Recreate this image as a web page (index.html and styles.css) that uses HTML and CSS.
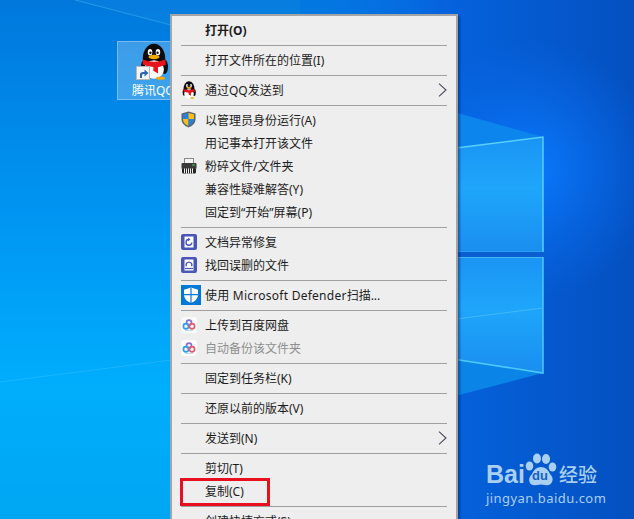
FILE: index.html
```html
<!DOCTYPE html>
<html lang="zh-CN">
<head>
  <meta charset="UTF-8">
  <title>右键菜单</title>
  <link rel="stylesheet" href="styles.css">
</head>
<body>
  <svg class="icon-defs" width="0" height="0">
    <defs>
      <symbol id="penguin" viewBox="0 0 24 28">
        <ellipse cx="12" cy="12" rx="8.5" ry="11.5" fill="#0a0a0a"/>
        <ellipse cx="4.5" cy="18" rx="2.4" ry="5" fill="#101010"/>
        <ellipse cx="20" cy="18" rx="2.6" ry="5.5" fill="#101010"/>
        <ellipse cx="12" cy="20" rx="7.5" ry="7" fill="#fff"/>
        <path d="M3.6 12.5Q12 16 20.6 12.5L21 16.5Q16 18.2 15 18.4L15 23L11.5 21L11.5 18.2Q7 18 3.4 16Z" fill="#e8141c"/>
        <ellipse cx="9" cy="7" rx="1.7" ry="2.4" fill="#fff"/>
        <ellipse cx="15" cy="7" rx="1.7" ry="2.4" fill="#fff"/>
        <circle cx="9.3" cy="7.4" r=".9" fill="#111"/>
        <circle cx="14.7" cy="7.4" r=".9" fill="#111"/>
        <ellipse cx="12" cy="10.6" rx="4.2" ry="1.7" fill="#f5a800"/>
        <ellipse cx="17" cy="26.6" rx="3.4" ry="1.2" fill="#f5a800"/>
      </symbol>
      <symbol id="baidu-cloud" viewBox="0 0 16 16">
        <rect width="16" height="16" rx="3" fill="#fbfbfb"/>
        <circle cx="8" cy="5.6" r="2.5" fill="none" stroke="#8b6fd0" stroke-width="1.7"/>
        <circle cx="5" cy="9.2" r="2.6" fill="none" stroke="#2f9df0" stroke-width="1.7"/>
        <circle cx="11" cy="9.2" r="2.6" fill="none" stroke="#ea5a6a" stroke-width="1.7"/>
        <path d="M4 13.4H12" stroke="#9bd0f5" stroke-width=".8"/>
      </symbol>
      <symbol id="chevron" viewBox="0 0 9 14">
        <path d="M1 .7L8 7L1 13.3" fill="none" stroke="#4a4a5c" stroke-width="1.1"/>
      </symbol>
    </defs>
  </svg>

  <div class="desktop">
    <svg class="wallpaper" viewBox="0 0 634 519" preserveAspectRatio="none">
      <defs>
        <linearGradient id="wall-left" x1="0" y1="0" x2="0" y2="1">
          <stop offset="0" stop-color="#0078dc"/>
          <stop offset=".45" stop-color="#0098f4"/>
          <stop offset=".75" stop-color="#00aefc"/>
          <stop offset="1" stop-color="#00a6f2"/>
        </linearGradient>
        <linearGradient id="wall-right" x1="0" y1="0" x2="1" y2="0">
          <stop offset="0" stop-color="#0a74ee" stop-opacity=".2"/>
          <stop offset=".45" stop-color="#0562dc"/>
          <stop offset="1" stop-color="#0450c0"/>
        </linearGradient>
        <radialGradient id="wall-glow" cx="530" cy="170" r="130" gradientUnits="userSpaceOnUse">
          <stop offset="0" stop-color="#0a7cff" stop-opacity=".95"/>
          <stop offset="1" stop-color="#0a6cf0" stop-opacity="0"/>
        </radialGradient>
        <linearGradient id="pane" x1="0" y1="0" x2="0" y2="1">
          <stop offset="0" stop-color="#1a94f4"/>
          <stop offset=".45" stop-color="#1ea6fa"/>
          <stop offset="1" stop-color="#1a8ef0"/>
        </linearGradient>
      </defs>
      <rect width="634" height="519" fill="url(#wall-left)"/>
      <rect x="300" width="334" height="519" fill="url(#wall-right)"/>
      <rect x="400" y="40" width="234" height="270" fill="url(#wall-glow)"/>
      <path d="M75 0L171 25L300 60V0Z" fill="#1a8fe8" opacity=".25"/>
      <path d="M75 0L171 25" stroke="#38a8ee" stroke-width="1.2" opacity=".6"/>
      <path d="M0 382L171 360" stroke="#30c0ff" stroke-width="1" opacity=".55"/>
      <path d="M440 108L543 137L440 150Z" fill="#0c86ec"/>
      <path d="M440 355L543 373L440 400Z" fill="#0a84e6"/>
      <path d="M440 150L543 137V252H440Z" fill="url(#pane)"/>
      <path d="M440 257H543V373L440 357Z" fill="url(#pane)"/>
      <path d="M440 150L543 137V252" fill="none" stroke="#58d0fa" stroke-width="1.5"/>
      <path d="M440 252H543" stroke="#38b0f4" stroke-width="1"/>
      <path d="M440 257H543V373L440 357" fill="none" stroke="#4cc8fa" stroke-width="1.5"/>
      <path d="M440 321L543 308" stroke="#42b8f6" stroke-width="1"/>
      <path d="M440 252H544V257H440Z" fill="#0a5ed0"/>
    </svg>

    <div class="shortcut">
      <svg class="shortcut-penguin" width="32" height="37"><use href="#penguin"/></svg>
      <span class="shortcut-arrow">
        <svg width="11" height="11" viewBox="0 0 11 11"><path d="M2 10V6.5Q2 4 5 4H6.5V1.5L10.5 5L6.5 8.5V6H5Q4 6 4 7.5V10Z" fill="#2a66b0"/></svg>
      </span>
      <span class="shortcut-label">腾讯QQ</span>
    </div>

    <div class="menu">
      <div class="menu-item menu-item-bold"><span class="menu-icon"></span>打开(O)</div>
      <div class="menu-sep"></div>
      <div class="menu-item"><span class="menu-icon"></span>打开文件所在的位置(I)</div>
      <div class="menu-sep"></div>
      <div class="menu-item">
        <span class="menu-icon"><svg width="16" height="18"><use href="#penguin"/></svg></span>通过QQ发送到
        <svg class="menu-arrow" width="9" height="14"><use href="#chevron"/></svg>
      </div>
      <div class="menu-sep"></div>
      <div class="menu-item">
        <span class="menu-icon">
          <svg width="15" height="17" viewBox="0 0 15 17">
            <path d="M7.5 .5L14.5 2.5V8.5Q14.5 13.5 7.5 16.5Q.5 13.5 .5 8.5V2.5Z" fill="#5a6470"/>
            <path d="M7.5 2L7.5 8H2V3.3Z" fill="#2a80d8"/>
            <path d="M7.5 2L13 3.3V8H7.5Z" fill="#f7c020"/>
            <path d="M2 8H7.5V15Q2.3 12.7 2 8.6Z" fill="#f7c020"/>
            <path d="M7.5 8H13V8.6Q12.7 12.7 7.5 15Z" fill="#2a80d8"/>
          </svg>
        </span>以管理员身份运行(A)
      </div>
      <div class="menu-item"><span class="menu-icon"></span>用记事本打开该文件</div>
      <div class="menu-item">
        <span class="menu-icon">
          <svg width="16" height="16" viewBox="0 0 16 16">
            <rect x="3.5" y=".5" width="9" height="5" fill="#f4f4f4" stroke="#8a8a8a"/>
            <rect x=".5" y="5" width="15" height="6" rx="1" fill="#3a3a3a"/>
            <rect x="11" y="6.5" width="3" height="1" fill="#4fd24f"/>
            <path d="M1 11H15V14Q15 15.5 13.5 15.5H2.500Q1 15.500 1 14Z" fill="#222"/>
            <path d="M3.500 10.500V15M5.500 10.500V15.500M7.500 10.500V15.500M9.500 10.500V15.500M11.500 10.500V15.500" stroke="#f0f0f0"/>
          </svg>
        </span>粉碎文件/文件夹
      </div>
      <div class="menu-item"><span class="menu-icon"></span>兼容性疑难解答(Y)</div>
      <div class="menu-item"><span class="menu-icon"></span>固定到“开始”屏幕(P)</div>
      <div class="menu-sep"></div>
      <div class="menu-item">
        <span class="menu-icon">
          <svg width="16" height="16" viewBox="0 0 16 16">
            <rect width="16" height="16" rx="2" fill="#4a55b8"/>
            <path d="M3.500 2.500H12.500V13.500H3.500Z" fill="#fff"/>
            <path d="M10.800 8.500A2.900 2.900 0 1 1 8 5.500" fill="none" stroke="#4a55b8" stroke-width="1.400"/>
            <path d="M7 3.800L9.500 5.500L7 7.200Z" fill="#4a55b8"/>
          </svg>
        </span>文档异常修复
      </div>
      <div class="menu-item">
        <span class="menu-icon">
          <svg width="16" height="16" viewBox="0 0 16 16">
            <rect width="16" height="16" rx="2" fill="#4a55b8"/>
            <path d="M3.500 2.500H12.500V13.500H3.500Z" fill="#fff"/>
            <path d="M5.400 9.300A2.900 2.900 0 1 1 10.600 9.300" fill="none" stroke="#4a55b8" stroke-width="1.400"/>
            <path d="M4 11.500H12" stroke="#4a55b8" stroke-width="1.200"/>
          </svg>
        </span>找回误删的文件
      </div>
      <div class="menu-sep"></div>
      <div class="menu-item">
        <span class="menu-icon">
          <svg width="20" height="20" viewBox="0 0 20 20">
            <rect width="20" height="20" fill="#0078d7"/>
            <path d="M10 2.500L17 4.800V10Q17 15 10 18Q3 15 3 10V4.800Z" fill="#fff"/>
            <path d="M10 2.500V18M3 9.700H17" stroke="#0078d7" stroke-width="1.200"/>
          </svg>
        </span><span class="menu-latin">使用 Microsoft Defender</span>扫描...
      </div>
      <div class="menu-sep"></div>
      <div class="menu-item"><span class="menu-icon"><svg width="16" height="16"><use href="#baidu-cloud"/></svg></span>上传到百度网盘</div>
      <div class="menu-item menu-item-disabled"><span class="menu-icon"><svg width="16" height="16"><use href="#baidu-cloud"/></svg></span>自动备份该文件夹</div>
      <div class="menu-sep"></div>
      <div class="menu-item"><span class="menu-icon"></span>固定到任务栏(K)</div>
      <div class="menu-sep"></div>
      <div class="menu-item"><span class="menu-icon"></span>还原以前的版本(V)</div>
      <div class="menu-sep"></div>
      <div class="menu-item">
        <span class="menu-icon"></span>发送到(N)
        <svg class="menu-arrow" width="9" height="14"><use href="#chevron"/></svg>
      </div>
      <div class="menu-sep"></div>
      <div class="menu-item"><span class="menu-icon"></span>剪切(T)</div>
      <div class="menu-item"><span class="menu-icon"></span>复制(C)</div>
      <div class="menu-sep"></div>
      <div class="menu-item"><span class="menu-icon"></span>创建快捷方式(S)</div>
    </div>

    <div class="red-box"></div>

    <div class="watermark">
      <div class="watermark-logo">
        <span class="watermark-bai">Bai</span>
        <span class="watermark-paw">
          <svg width="32" height="36" viewBox="0 0 32 36">
            <ellipse cx="4.500" cy="13" rx="3.800" ry="4.600" fill="#a9cff2"/>
            <ellipse cx="12" cy="5.500" rx="4" ry="5" fill="#a9cff2"/>
            <ellipse cx="21" cy="6" rx="4" ry="5" fill="#a9cff2"/>
            <ellipse cx="27.500" cy="14" rx="3.800" ry="4.600" fill="#a9cff2"/>
            <path d="M16 14Q22 14 25 21Q29 25 27 29Q25 33 20 32Q16 31 12 32Q6 33 4.500 29Q3 25 7 21Q10 14 16 14Z" fill="#a9cff2"/>
          </svg>
          <span class="watermark-du">du</span>
        </span>
        <span class="watermark-cn">经验</span>
      </div>
      <div class="watermark-url">jingyan.baidu.com</div>
    </div>
  </div>
</body>
</html>
```

FILE: styles.css
```css
* {
  margin: 0;
  padding: 0;
  box-sizing: border-box;
}
body {
  font-family: "Noto Sans", "Noto Sans CJK SC", sans-serif;
  font-size: 12px;
  background: #0078dc;
}
.icon-defs {
  position: absolute;
}
.desktop {
  position: relative;
  width: 634px;
  height: 519px;
  overflow: hidden;
}
.wallpaper {
  position: absolute;
  left: 0;
  top: 0;
  width: 634px;
  height: 519px;
}

/* selected desktop icon */
.shortcut {
  position: absolute;
  left: 117px;
  top: 41px;
  width: 76px;
  height: 59px;
  background: rgba(255, 255, 255, 0.24);
  border: 1px solid rgba(255, 255, 255, 0.3);
}
.shortcut-penguin {
  position: absolute;
  left: 20px;
  top: 1px;
}
.shortcut-arrow {
  position: absolute;
  left: 18px;
  top: 24px;
  width: 14px;
  height: 14px;
  display: flex;
  align-items: center;
  justify-content: center;
  background: #f4f4f4;
  border: 1px solid #b8b8b8;
}
.shortcut-label {
  position: absolute;
  left: 14px;
  top: 40px;
  color: white;
  font-size: 12px;
  line-height: 18px;
  white-space: nowrap;
}

/* context menu */
.menu {
  position: absolute;
  left: 170px;
  top: 14px;
  width: 288px;
  padding: 2px 0;
  background: #eeeeee;
  border: 2px solid #a4a4a4;
  border-bottom: 0;
  box-shadow: 2px 2px 2px rgba(0, 30, 90, 0.45);
}
.menu-item {
  display: flex;
  align-items: center;
  height: 23px;
  padding-left: 9px;
  color: #1c1c1c;
  white-space: nowrap;
  position: relative;
}
.menu-item-bold {
  font-weight: 700;
}
.menu-item-disabled {
  color: #8e8e8e;
}
.menu-icon {
  width: 24px;
  flex: none;
  display: flex;
  align-items: center;
}
.menu-latin {
  letter-spacing: 0.25px;
}
.menu-arrow {
  margin-left: auto;
  margin-right: 9px;
}
.menu-sep {
  height: 7px;
  padding-top: 4px;
  margin: 0 9px;
}
.menu-sep::after {
  content: "";
  display: block;
  height: 1px;
  background: #a0a0a0;
}

/* annotation drawn on the screenshot */
.red-box {
  position: absolute;
  left: 180px;
  top: 478px;
  width: 90px;
  height: 28px;
  border: 3px solid #e8101f;
}

/* site watermark */
.watermark {
  position: absolute;
  left: 486px;
  top: 450px;
  width: 120px;
  color: #a9cff2;
}
.watermark-logo {
  display: flex;
  align-items: flex-end;
  height: 39px;
}
.watermark-bai {
  font-family: "Liberation Sans", sans-serif;
  font-size: 25px;
  font-weight: 700;
  line-height: 30px;
  width: 39px;
}
.watermark-paw {
  position: relative;
  width: 32px;
  height: 36px;
  display: block;
}
.watermark-du {
  position: absolute;
  left: 7px;
  top: 16px;
  font-family: "Liberation Sans", sans-serif;
  font-size: 13px;
  font-weight: 700;
  line-height: 14px;
  color: #1560c0;
}
.watermark-cn {
  margin-left: 2px;
  font-family: "Noto Sans CJK SC", sans-serif;
  font-size: 19px;
  font-weight: 500;
  line-height: 30px;
}
.watermark-url {
  margin-top: 1px;
  font-size: 13px;
  line-height: 16px;
  letter-spacing: 0.45px;
}
```
